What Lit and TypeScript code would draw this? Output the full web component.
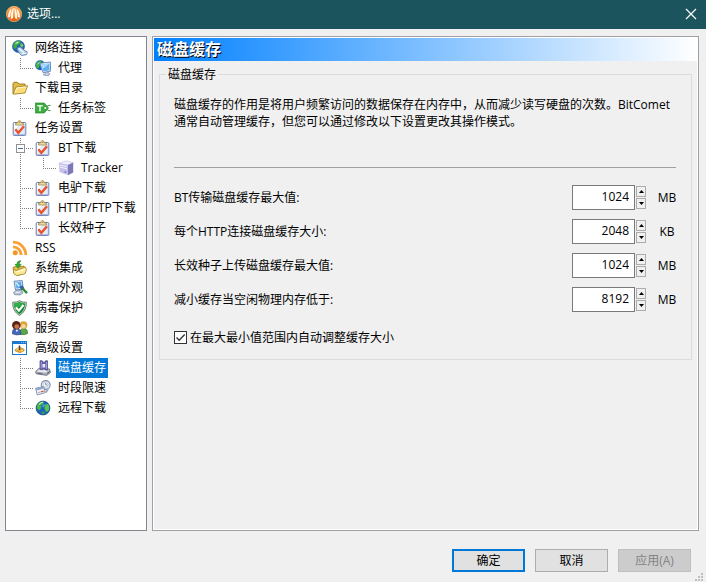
import { LitElement, html, svg, css, nothing } from "lit";
import type { SVGTemplateResult } from "lit";
import { customElement, property, state } from "lit/decorators.js";
import { classMap } from "lit/directives/class-map.js";

const clipboard = svg`
  <rect x="1.200" y="2.500" width="12.600" height="13" rx="1" fill="#e4ecfa" stroke="#6a7cab"/>
  <path d="M2 3.500h6L2 12z" fill="#fff"/>
  <path d="M2 14.800h11.300V4" fill="none" stroke="#94a9da" stroke-width="1"/>
  <path d="M3.500 5V3.500l2.300-.8C6 .9 6.800.5 7.500.5S9 .9 9.200 2.700l2.300.8V5z" fill="#f1dd94" stroke="#a18a4c" stroke-width=".8"/>
  <path d="M6.800 2.200h1.400" stroke="#7e6a34"/>
  <path d="M3.300 9.300l3 3.500L12 6.300" fill="none" stroke="#e8532c" stroke-width="2.400"/>`;

const icons: Record<string, SVGTemplateResult> = {
  network: svg`
    <circle cx="6.500" cy="6.500" r="6" fill="#1f62bd" stroke="#174a90" stroke-width=".6"/>
    <path d="M3 2Q6 0 9 1.500L7.500 4 5 5.500 4.500 8.500 2 8.500Q0 5 3 2z" fill="#3fae3a"/>
    <path d="M9 2.800l2.500 2.200-1 2.500-2.500-1.500z" fill="#6bd054"/>
    <path d="M3.500 3.500l3-1.500" stroke="#c9f5cc" stroke-width="1.300"/>
    <path d="M5 9l1.500-2 2.200.2L13 10.800l2.300 1-.8 2.900-5 .8-2-2z" fill="#b5cfec" stroke="#54749d" stroke-width=".8"/>
    <path d="M6.800 8.500l5.200 4M10 14l4.500-1" stroke="#f4faff" stroke-width="1.100"/>`,
  proxy: svg`
    <circle cx="5.200" cy="5.200" r="5" fill="#1d5fba"/>
    <path d="M1.200 3.500Q4 0 7.500 .8L5 4 3.500 8.500 1 7.500z" fill="#43b53b"/>
    <path d="M2.500 4l2-1.800" stroke="#bff3bb"/>
    <path d="M4.800 3.300l10.600-1.300.2 9.200-7.600 1.500z" fill="#e3f0fb" stroke="#5c86b8" stroke-width=".9"/>
    <path d="M6.200 4.500l8.200-1 .2 6.700-6.100 1.200z" fill="#62aff0"/>
    <path d="M6.200 4.500l8.200-1-6.600 5.500z" fill="#aadafb"/>
    <path d="M10.500 12.400l2.500-.5.5 1.300 1.300.5-1 1.900-4.300.2-1.300-1.300 2.300-.8z" fill="#c5d0e4" stroke="#7987a4" stroke-width=".7"/>`,
  folder: svg`
    <path d="M1 14V3.500l1-1.200h3.500L7 4h6v3" fill="#e2bb48" stroke="#9d7a22"/>
    <path d="M1.200 14.200L4 7l11.600-1.200L13 13z" fill="#fadd78" stroke="#a8862b" stroke-width=".9"/>
    <path d="M3 12.500l1.900-4.600 9-.9" fill="none" stroke="#fff7cf"/>`,
  tag: svg`
    <path d="M.3 3h9l4.200 5-4.200 5h-9z" fill="#3bab42" stroke="#258a30" stroke-width=".7"/>
    <path d="M2.300 5.800h5.400M5 5.800V11.200" stroke="#e9f9e6" stroke-width="1.500"/>
    <path d="M10.500 7L14 5.300l1.500.2M11 9l3 1.700 1.500-.2" stroke="#4d8f4d" fill="none"/>
    <circle cx="10.300" cy="8" r="1.100" fill="#f2fbef"/>`,
  clipboard,
  server: svg`
    <path d="M.8 3.200L8.500.8l6.700 1.700-5.200 2.500z" fill="#f0eefe" stroke="#b9b6e0" stroke-width=".5"/>
    <path d="M.8 3.200l9.200 1.800v10.300L1.500 12z" fill="#c3c0eb"/>
    <path d="M10 5l5.200-2.500v10L10 15.300z" fill="#7d79b8"/>
    <path d="M1.500 5l7.500 1.600M1.500 7l7.500 1.800" stroke="#f2f0ff"/>
    <path d="M6.500 11.700l1.700.6" stroke="#7770b4" stroke-width="1.300"/>`,
  rss: svg`
    <circle cx="3.200" cy="12.800" r="2.500" fill="#f59620"/>
    <path d="M1 6.800A8.200 8.200 0 0 1 9.200 15M1 2.200A12.800 12.800 0 0 1 13.800 15" fill="none" stroke="#f9a133" stroke-width="2.800"/>`,
  integrate: svg`
    <path d="M1 7.500l3-1.200 1 .8 7-1 1.500 6.500-8 3L2 13.500z" fill="#dfbd50" stroke="#957623" stroke-width=".8"/>
    <path d="M1.300 9.500l3.300 1L13.500 7l1 3.500-2 3.500-8 1.500-2.700-2z" fill="#fbea93" stroke="#a18229" stroke-width=".8"/>
    <path d="M4.500 12l8.500-3" stroke="#fffbe0" stroke-width="1.300"/>
    <path d="M9 .8Q4.500 1 5 4.500L3 4.300 6.200 8.200 9.200 4.300l-2 .2Q6.800 2.200 9 .8z" fill="#35ad2c" stroke="#19791a" stroke-width=".6"/>`,
  appearance: svg`
    <path d="M2 1.200l8.200-.6 1 8.600-7.700.9z" fill="#d2e6f8" stroke="#5c80ad" stroke-width=".9"/>
    <path d="M3.500 2.500l5.600-.4.7 5.700-5.300.6z" fill="#5aa8ec"/>
    <path d="M4.200 3l3 3.300" stroke="#d7efff" stroke-width="1.500"/>
    <path d="M1.500 12.500l3-2.300h5l1.500 2.600-3 2.200-5.500-.4z" fill="#b8c5d9" stroke="#6b7b96" stroke-width=".7"/>
    <path d="M3.500 12.500l4.500-.5" stroke="#f1f5fb"/>
    <path d="M7.500 7l2.800-1.700 2.200 3L9.500 10.300z" fill="#3d5e96"/>
    <path d="M10.500 8.500l4.500 4.700" stroke="#2c8d34" stroke-width="2.400"/>`,
  shield: svg`
    <path d="M7.500.7Q10 2.500 14.300 2.200 14.800 11 7.500 15.500.2 11 .7 2.200 5 2.500 7.500.7z" fill="#bfd8c4" stroke="#4a6853" stroke-width=".8"/>
    <path d="M7.500 2Q10 3.600 13 3.400 13 10.200 7.500 14.200 2 10.200 2 3.400 5 3.600 7.500 2z" fill="#0f8a30"/>
    <path d="M7.500 2Q10 3.600 13 3.400L3.200 9Q2 6.500 2 3.400 5 3.600 7.500 2z" fill="#31ae4b"/>
    <path d="M4 7.500l2.900 3.200L11.500 5" fill="none" stroke="#fff" stroke-width="2.100"/>`,
  people: svg`
    <path d="M8 14.500q-.5-6 3.300-6.200 4.400-.3 4.400 5.200-3 1.800-7.700 1z" fill="#5ba64b" stroke="#34702c" stroke-width=".6"/>
    <circle cx="11.600" cy="5" r="3.800" fill="#dca634"/>
    <circle cx="11.400" cy="6.300" r="2.300" fill="#f6d2a2"/>
    <path d="M.3 13.800q-.5-5.300 4.200-5.300t4.500 5.800q-4.500 1.500-8.700-.5z" fill="#4468bd" stroke="#27407f" stroke-width=".6"/>
    <circle cx="4.300" cy="5.200" r="4.200" fill="#5b2317"/>
    <circle cx="4.800" cy="6.600" r="2.400" fill="#c6734f"/>
    <path d="M3.800 9.700l1.100 2.500 1.300-2.500z" fill="#fff"/>`,
  advanced: svg`
    <rect x=".5" y="1.500" width="14" height="13" fill="#fff" stroke="#1979d2"/>
    <path d="M0 1h15v3H0z" fill="#1979d2"/>
    <path d="M9 2.500h1M11 2.500h1M13 2.500h1" stroke="#8cc3f5"/>
    <path d="M3.200 9.500L7.500 7.200l4.600 2v1.600L8 12.800l-4.800-1.900z" fill="#eaac2e" stroke="#a87a2a" stroke-width=".6"/>
    <path d="M7.500 5.500v4.500" stroke="#4a4335" stroke-width="1.500"/>
    <path d="M4.500 9.700l2.200-1M9 11l2-.9" stroke="#ffe9a6"/>`,
  disk: svg`
    <path d="M.6 11.500l3.500-3.200 10.400.6 1 3.600-3.700 2.900-10.700-1.600z" fill="#a9adb9" stroke="#5c616f" stroke-width=".7"/>
    <path d="M1.500 11.500l3-2.300 9.500.8-3 2.700z" fill="#e6e8ee"/>
    <path d="M2.500 13.200l5 .8M12 13.500l2.500-1.700" stroke="#5c6272"/>
    <path d="M5 .8h2.200l1.300 1.500h1.200L10.500.8h2v9.400l-2-.2-.8-1H8l-.8.8-2.200-.4z" fill="#6663a8" stroke="#43417c" stroke-width=".7"/>
    <path d="M6.200 1.500V8.500M11.600 2v7" stroke="#a5a3dc"/>
    <path d="M7.500 4h2.700v3.500H7.500z" fill="#e9e9fa"/>`,
  clock: svg`
    <circle cx="10.700" cy="5" r="4.400" fill="#e3ebf6" stroke="#7c8ca8" stroke-width="1.100"/>
    <circle cx="10.700" cy="4.800" r="2.400" fill="#fff" stroke="#adbbd2" stroke-width=".7"/>
    <path d="M10.700 3V5h1.600" fill="none" stroke="#5f6e8c" stroke-width=".8"/>
    <path d="M13 8.500l-2 4" stroke="#a0aabb" stroke-width="2"/>
    <path d="M.7 8.200l8-1.700 1.500 6.200-8 2.300z" fill="#f1f3f8" stroke="#6f7c96" stroke-width=".8"/>
    <path d="M1 8.400l7.700-1.600.5 1.800-7.700 1.800z" fill="#8ba6d2"/>
    <path d="M3 12.700l2.500-.7" stroke="#a4adbd"/>
    <path d="M6 11.900l2.500-.8" stroke="#d4503c" stroke-width="1.500"/>`,
  remote: svg`
    <circle cx="8" cy="8" r="6.900" fill="#1865bb" stroke="#0e4488" stroke-width=".8"/>
    <path d="M2 5Q4.500 1 9 1.500L8 4.500 5.500 5.500 6.500 7.500 4.500 10.500Q1.200 9 2 5z" fill="#4cb545"/>
    <path d="M10 5l3-1.300Q15.300 8 13 11.300l-2 .5-1.500-3.300z" fill="#5cc54b"/>
    <path d="M6 12l3-.5 1 1.800-2.500 1z" fill="#3f9f3d"/>
    <path d="M4 4.500Q5.500 2.500 8 2.300" fill="none" stroke="#c6f3c4" stroke-width="1.100"/>
    <path d="M7.500 7l2-2.500" stroke="#4ba9ef" stroke-width="1.500"/>`,
};

/** Connector drawn in front of a tree row; "open" is a branch with an expander box. */
type Guide = "pass" | "branch" | "last" | "open";

interface Node {
  label: string;
  icon: string;
  guides: Guide[];
}

const nodes: Node[] = [
  { label: "网络连接", icon: "network", guides: [] },
  { label: "代理", icon: "proxy", guides: ["last"] },
  { label: "下载目录", icon: "folder", guides: [] },
  { label: "任务标签", icon: "tag", guides: ["last"] },
  { label: "任务设置", icon: "clipboard", guides: [] },
  { label: "BT下载", icon: "clipboard", guides: ["open"] },
  { label: "Tracker", icon: "server", guides: ["pass", "last"] },
  { label: "电驴下载", icon: "clipboard", guides: ["branch"] },
  { label: "HTTP/FTP下载", icon: "clipboard", guides: ["branch"] },
  { label: "长效种子", icon: "clipboard", guides: ["last"] },
  { label: "RSS", icon: "rss", guides: [] },
  { label: "系统集成", icon: "integrate", guides: [] },
  { label: "界面外观", icon: "appearance", guides: [] },
  { label: "病毒保护", icon: "shield", guides: [] },
  { label: "服务", icon: "people", guides: [] },
  { label: "高级设置", icon: "advanced", guides: [] },
  { label: "磁盘缓存", icon: "disk", guides: ["branch"] },
  { label: "时段限速", icon: "clock", guides: ["branch"] },
  { label: "远程下载", icon: "remote", guides: ["last"] },
];

@customElement("option-tree")
export class OptionTree extends LitElement {
  @state() private selected = "磁盘缓存";

  static styles = css`
    :host {
      display: block;
      box-sizing: border-box;
      padding: 1px 0 1px 6px;
      background: #fff;
      border: 1px solid #828790;
    }
    .row {
      display: flex;
      align-items: center;
      height: 20px;
    }
    .guide {
      flex: none;
      width: 23px;
      height: 20px;
    }
    .icon {
      flex: none;
      width: 16px;
      height: 16px;
      margin-right: 5px;
    }
    .label {
      height: 20px;
      padding: 0 2px;
      border: 0;
      background: none;
      color: #000;
      font: inherit;
      line-height: 20px;
      white-space: nowrap;
    }
    .label.selected {
      background: #0078d7;
      color: #fff;
    }
  `;

  private guide(kind: Guide) {
    const end = kind === "last" ? 11 : 20;
    return html`<svg class="guide" viewBox="0 0 23 20" shape-rendering="crispEdges" aria-hidden="true">
      <path d="M8.500 0V${end}" stroke="#808080" stroke-dasharray="1 1" />
      ${kind === "pass"
        ? nothing
        : svg`<path d="M8 10.500H21" stroke="#808080" stroke-dasharray="1 1"/>`}
      ${kind === "open"
        ? svg`<rect x="4.500" y="6.500" width="8" height="8" fill="#fff" stroke="#919191"/>
            <path d="M6 10.500h5" stroke="#4b63a7"/>`
        : nothing}
    </svg>`;
  }

  render() {
    return html`<div role="tree" aria-label="选项">
      ${nodes.map((n) => {
        const selected = n.label === this.selected;
        return html`<div class="row" role="none">
          ${n.guides.map((g) => this.guide(g))}
          <svg class="icon" viewBox="0 0 16 16" aria-hidden="true">${icons[n.icon]}</svg>
          <button
            class=${classMap({ label: true, selected })}
            role="treeitem"
            aria-level=${n.guides.length + 1}
            aria-selected=${selected}
            @click=${() => (this.selected = n.label)}
          >${n.label}</button>
        </div>`;
      })}
    </div>`;
  }
}

@customElement("spin-field")
export class SpinField extends LitElement {
  @property() label = "";
  @property() unit = "";
  @property({ type: Number }) value = 0;

  static styles = css`
    :host {
      display: flex;
      align-items: center;
      height: 26px;
    }
    label {
      flex: 1;
    }
    input {
      box-sizing: border-box;
      width: 63px;
      height: 25px;
      padding: 0 5px 1px;
      border: 1px solid #7a7a7a;
      background: #fff;
      color: #000;
      font: inherit;
      text-align: right;
      outline: none;
    }
    .spin {
      display: flex;
      flex-direction: column;
      gap: 1px;
      margin-left: 1px;
    }
    .spin button {
      display: flex;
      align-items: center;
      justify-content: center;
      box-sizing: border-box;
      width: 10px;
      height: 11px;
      padding: 0;
      border: 1px solid #acacac;
      background: #f0f0f0;
    }
    svg {
      flex: none;
      width: 5px;
      height: 3px;
    }
    .unit {
      width: 42px;
      text-align: center;
    }
  `;

  render() {
    return html`
      <label for="v">${this.label}</label>
      <input id="v" type="text" inputmode="numeric" .value=${String(this.value)} />
      <span class="spin">
        <button aria-label="增加" @click=${() => this.value++}>
          <svg viewBox="0 0 5 3"><path d="M0 3L2.500 0 5 3z" /></svg>
        </button>
        <button aria-label="减少" @click=${() => this.value--}>
          <svg viewBox="0 0 5 3"><path d="M0 0L2.500 3 5 0z" /></svg>
        </button>
      </span>
      <span class="unit">${this.unit}</span>
    `;
  }
}

@customElement("app-root")
export class AppRoot extends LitElement {
  static styles = css`
    :host {
      display: flex;
      flex-direction: column;
      box-sizing: border-box;
      min-height: 100vh;
      background: #f0f0f0;
      color: #000;
      font: 12px/17px "Open Sans", "Noto Sans CJK SC", sans-serif;
    }
    .titlebar {
      display: flex;
      align-items: center;
      height: 29px;
      padding: 0 9px 2px 6px;
      box-sizing: border-box;
      background: #1c545d;
      color: #fff;
    }
    .logo {
      width: 16px;
      height: 16px;
      margin-right: 5px;
    }
    .titlebar h1 {
      flex: 1;
      margin: 0;
      font-size: 12px;
      font-weight: 400;
    }
    .close {
      display: flex;
      padding: 0;
      border: 0;
      background: none;
    }
    .close svg {
      width: 12px;
      height: 12px;
    }
    .content {
      display: flex;
      flex: 1;
      gap: 5px;
      padding: 7px 7px 0 5px;
    }
    option-tree {
      flex: none;
      width: 142px;
    }
    .panel {
      flex: 1;
      min-width: 0;
      border: 1px solid #a0a0a5;
      box-shadow: inset 0 0 0 1px #fff;
      padding: 1px;
    }
    .panel h2 {
      margin: 0;
      padding-left: 3px;
      background: linear-gradient(to right, #0080ff, #fff);
      color: #fff;
      font-size: 16px;
      line-height: 23px;
      text-shadow: 1px 1px 0 #000;
    }
    fieldset {
      min-width: 0;
      margin: 5px 5px 0;
      padding: 0 14px 13px;
      border: 1px solid #dcdcdc;
    }
    legend {
      margin-left: -8px;
      padding: 0 2px;
    }
    .note {
      margin: 13px 0 37px;
    }
    .rule {
      height: 1px;
      margin: 0 1px 16px 0;
      border: 0;
      background: #a0a0a0;
    }
    .fields {
      display: grid;
      gap: 8px;
      margin-right: -11px;
    }
    .check {
      display: flex;
      align-items: center;
      gap: 3px;
      margin-top: 17px;
    }
    .check input {
      appearance: none;
      box-sizing: border-box;
      width: 13px;
      height: 13px;
      margin: 0;
      border: 1px solid #333;
      background: #fff;
    }
    .check input:checked {
      background: #fff
        url("data:image/svg+xml,%3Csvg xmlns='http://www.w3.org/2000/svg' viewBox='0 0 11 11'%3E%3Cpath d='M1.500 5.500l2.700 2.700L9.700 2.500' fill='none' stroke='%23333' stroke-width='1.300'/%3E%3C/svg%3E");
    }
    .actions {
      display: flex;
      justify-content: flex-end;
      gap: 10px;
      padding: 18px 15px 0 0;
    }
    .actions button {
      box-sizing: border-box;
      width: 73px;
      height: 23px;
      padding: 0;
      border: 1px solid #adadad;
      background: #e1e1e1;
      color: #000;
      font: inherit;
    }
    .actions .default {
      border: 2px solid #0078d7;
    }
    .actions button:disabled {
      border-color: #bfbfbf;
      background: #ccc;
      color: #838383;
    }
    .grip {
      display: block;
      align-self: flex-end;
      width: 8px;
      height: 8px;
      margin: 1px 3px 1px 0;
    }
  `;

  render() {
    return html`
      <header class="titlebar">
        <svg class="logo" viewBox="0 0 16 16" aria-hidden="true">
          <defs>
            <linearGradient id="ball" x2="0" y2="1">
              <stop offset="0" stop-color="#ffa04a" />
              <stop offset=".5" stop-color="#f98a26" />
              <stop offset="1" stop-color="#e2560f" />
            </linearGradient>
          </defs>
          <circle cx="8" cy="8" r="7.700" fill="url(#ball)" stroke="#f8c79a" stroke-width=".6" />
          <path
            d="M2 11.500Q2.200 4.500 5.500 2.500L4 11zM4.800 13.300Q4.600 6 7 2L7 12zM8 12.500L7.300 2h1.400zM11.200 13.300Q11.400 6 9 2L9 12zM14 11.500Q13.800 4.500 10.500 2.500L12 11z"
            fill="#fff6ea"
          />
        </svg>
        <h1>选项...</h1>
        <button class="close" aria-label="关闭">
          <svg viewBox="0 0 12 12"><path d="M1 1l10 10M11 1L1 11" stroke="#fff" stroke-width="1.200" /></svg>
        </button>
      </header>
      <main class="content">
        <option-tree></option-tree>
        <section class="panel">
          <h2>磁盘缓存</h2>
          <fieldset>
            <legend>磁盘缓存</legend>
            <p class="note">
              磁盘缓存的作用是将用户频繁访问的数据保存在内存中，从而减少读写硬盘的次数。BitComet通常自动管理缓存，但您可以通过修改以下设置更改其操作模式。
            </p>
            <hr class="rule" />
            <div class="fields">
              <spin-field label="BT传输磁盘缓存最大值:" value="1024" unit="MB"></spin-field>
              <spin-field label="每个HTTP连接磁盘缓存大小:" value="2048" unit="KB"></spin-field>
              <spin-field label="长效种子上传磁盘缓存最大值:" value="1024" unit="MB"></spin-field>
              <spin-field label="减小缓存当空闲物理内存低于:" value="8192" unit="MB"></spin-field>
            </div>
            <label class="check"><input type="checkbox" checked />在最大最小值范围内自动调整缓存大小</label>
          </fieldset>
        </section>
      </main>
      <footer class="actions">
        <button class="default">确定</button>
        <button>取消</button>
        <button disabled>应用(A)</button>
      </footer>
      <svg class="grip" viewBox="0 0 8 8" shape-rendering="crispEdges" aria-hidden="true">
        <path d="M6 0h2v2H6zM3 3h2v2H3zM6 3h2v2H6zM0 6h2v2H0zM3 6h2v2H3zM6 6h2v2H6z" fill="#bfbfbf" />
      </svg>
    `;
  }
}
